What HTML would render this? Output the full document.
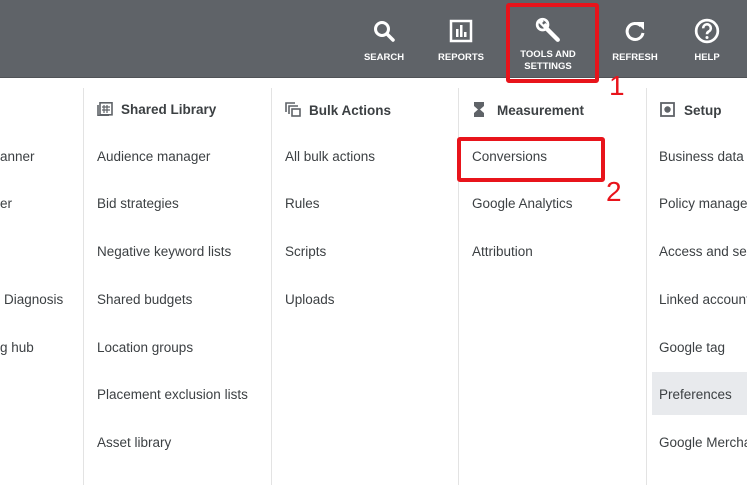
<!DOCTYPE html>
<html><head><meta charset="utf-8"><style>
*{margin:0;padding:0;box-sizing:border-box}
body{width:747px;height:485px;overflow:hidden;background:#fff;font-family:"Liberation Sans",Arial,sans-serif;position:relative;color:#3c4043}
.hdr{position:absolute;left:0;top:0;width:747px;height:78px;background:#5f6368;border-bottom:1px solid #505357}
.ic{position:absolute;top:19px;width:90px;text-align:center;color:#fff;font-size:9.5px;font-weight:bold;line-height:12px}
.ic svg{display:block;margin:0 auto 9px}
.div{position:absolute;top:88px;bottom:0;width:1px;background:#e3e3e3}
.t{position:absolute;font-size:13.5px;white-space:nowrap}
.h{position:absolute;top:102px;font-size:13.5px;font-weight:bold;color:#3c4043;white-space:nowrap}
.red{position:absolute;border:4px solid #e8141b;border-radius:3px}
.num{position:absolute;color:#e8141b;font-size:28px;font-family:"Liberation Sans",sans-serif}
</style></head><body>
<div class="hdr"></div>
<div class="ic" style="left:339px"><svg width="24" height="24" viewBox="0 0 24 24"><circle cx="10" cy="10" r="6.5" fill="none" stroke="#fff" stroke-width="3"/><path d="M15 15l6 6" stroke="#fff" stroke-width="3.5" stroke-linecap="round"/></svg>SEARCH</div>
<div class="ic" style="left:416px"><svg width="24" height="24" viewBox="0 0 24 24"><rect x="2" y="2" width="20" height="20" fill="none" stroke="#fff" stroke-width="2.5"/><rect x="7" y="10" width="2.5" height="8" fill="#fff"/><rect x="11" y="6" width="2.5" height="12" fill="#fff"/><rect x="15" y="13" width="2.5" height="5" fill="#fff"/></svg>REPORTS</div>
<div class="ic" style="left:503px;top:17px"><svg width="26" height="26" viewBox="0 0 24 24" style="margin-bottom:6px"><path d="M3 5l3-3 2 2-1.5 1.5 1.5 1.5 1.5-1.5 2 2-3 3z" fill="#fff"/><circle cx="7" cy="7" r="5" fill="none" stroke="#fff" stroke-width="2.5"/><path d="M10 10l11 11" stroke="#fff" stroke-width="4" stroke-linecap="round"/></svg>TOOLS AND<br>SETTINGS</div>
<div class="ic" style="left:590px"><svg width="24" height="24" viewBox="0 0 24 24"><path d="M18 7A8 8 0 1 0 20 14" fill="none" stroke="#fff" stroke-width="3"/><path d="M13 3h8v8z" fill="#fff"/></svg>REFRESH</div>
<div class="ic" style="left:662px;top:18px"><svg width="26" height="26" viewBox="0 0 24 24" style="margin-bottom:8px"><circle cx="12" cy="12" r="10" fill="none" stroke="#fff" stroke-width="2.5"/><path d="M8.5 9.5a3.5 3.5 0 1 1 5 3c-1 .6-1.5 1.2-1.5 2.5" fill="none" stroke="#fff" stroke-width="2.4"/><circle cx="12" cy="18" r="1.4" fill="#fff"/></svg>HELP</div>
<div class="red" style="left:506px;top:3px;width:93px;height:80px"></div>
<div class="num" style="left:609px;top:70px">1</div>

<div class="div" style="left:83px"></div>
<div class="div" style="left:271px"></div>
<div class="div" style="left:458px"></div>
<div class="div" style="left:646px"></div>

<div style="position:absolute;left:652px;top:372px;width:95px;height:43px;background:#e8eaed"></div>

<div class="t" style="left:0;top:149px">anner</div>
<div class="t" style="left:0;top:196px">er</div>
<div class="t" style="left:4px;top:292px">Diagnosis</div>
<div class="t" style="left:0;top:340px">g hub</div>

<div class="h" style="left:97px"><svg width="16" height="14" viewBox="0 0 16 14" style="vertical-align:-2px;margin-right:8px"><rect x="3" y="0.8" width="12" height="12" fill="none" stroke="#5f6368" stroke-width="1.6"/><path d="M1 3v10.5h11" fill="none" stroke="#5f6368" stroke-width="1.6"/><path d="M5 5h8M5 8h8M7 3v8M10 3v8" stroke="#5f6368" stroke-width="1.2"/></svg>Shared Library</div>
<div class="t" style="left:97px;top:149px">Audience manager</div>
<div class="t" style="left:97px;top:196px">Bid strategies</div>
<div class="t" style="left:97px;top:244px">Negative keyword lists</div>
<div class="t" style="left:97px;top:292px">Shared budgets</div>
<div class="t" style="left:97px;top:340px">Location groups</div>
<div class="t" style="left:97px;top:387px">Placement exclusion lists</div>
<div class="t" style="left:97px;top:435px">Asset library</div>

<div class="h" style="left:285px"><svg width="16" height="15" viewBox="0 0 16 15" style="vertical-align:-2px;margin-right:8px"><path d="M1 10V1h9" fill="none" stroke="#5f6368" stroke-width="1.6"/><path d="M4 12V4h9" fill="none" stroke="#5f6368" stroke-width="1.6"/><rect x="7" y="7" width="8" height="7" fill="none" stroke="#5f6368" stroke-width="1.6"/></svg>Bulk Actions</div>
<div class="t" style="left:285px;top:149px">All bulk actions</div>
<div class="t" style="left:285px;top:196px">Rules</div>
<div class="t" style="left:285px;top:244px">Scripts</div>
<div class="t" style="left:285px;top:292px">Uploads</div>

<div class="h" style="left:473px"><svg width="12" height="15" viewBox="0 0 12 15" style="vertical-align:-2px;margin-right:12px"><path d="M1 0h10v4L7 7.5 11 11v4H1v-4l4-3.5L1 4z" fill="#5f6368"/></svg>Measurement</div>
<div class="t" style="left:472px;top:149px">Conversions</div>
<div class="t" style="left:472px;top:196px">Google Analytics</div>
<div class="t" style="left:472px;top:244px">Attribution</div>
<div class="red" style="left:457px;top:137px;width:148px;height:45px"></div>
<div class="num" style="left:606px;top:176px">2</div>

<div class="h" style="left:660px"><svg width="15" height="15" viewBox="0 0 15 15" style="vertical-align:-2px;margin-right:9px"><rect x="1" y="1" width="13" height="13" fill="none" stroke="#5f6368" stroke-width="1.8"/><circle cx="7.5" cy="7.5" r="3.2" fill="#5f6368"/></svg>Setup</div>
<div class="t" style="left:659px;top:149px">Business data</div>
<div class="t" style="left:659px;top:196px">Policy manager</div>
<div class="t" style="left:659px;top:244px">Access and security</div>
<div class="t" style="left:659px;top:292px">Linked accounts</div>
<div class="t" style="left:659px;top:340px">Google tag</div>
<div class="t" style="left:659px;top:387px">Preferences</div>
<div class="t" style="left:659px;top:435px">Google Merchant</div>
</body></html>
